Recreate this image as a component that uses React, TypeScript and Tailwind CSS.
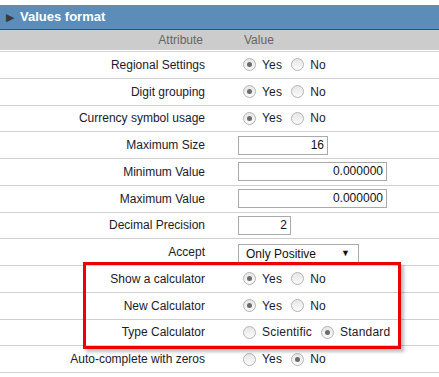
import React from 'react';

const font = { fontFamily: '"Liberation Sans", Arial, sans-serif' };

const Radio = ({ checked }: { checked?: boolean }) => (
  <span className="inline-flex items-center justify-center w-[13px] h-[13px] rounded-full border border-[#b4b4b4] bg-gradient-to-b from-[#e6e6e6] to-[#fbfbfb] shrink-0">
    {checked && <span className="w-[5px] h-[5px] rounded-full bg-[#6b6b6b]" />}
  </span>
);

const Choice = ({ options, selected }: { options: string[]; selected: number }) => (
  <div className="flex items-center pl-[5px]">
    {options.map((o, i) => (
      <div key={o} className="flex items-center mr-[9px]">
        <Radio checked={i === selected} />
        <span className="ml-[6px] text-[12px] tracking-[0.2px] text-[#1a1a2a]">{o}</span>
      </div>
    ))}
  </div>
);

const TextBox = ({ value, width }: { value: string; width: string }) => (
  <div className={`${width} h-[19px] border border-[#a9a9a9] bg-white text-right pr-[3px] text-[12px] leading-[17px] text-[#111]`}>
    {value}
  </div>
);

const rows: { label: string; value: React.ReactNode }[] = [
  { label: 'Regional Settings', value: <Choice options={['Yes', 'No']} selected={0} /> },
  { label: 'Digit grouping', value: <Choice options={['Yes', 'No']} selected={0} /> },
  { label: 'Currency symbol usage', value: <Choice options={['Yes', 'No']} selected={0} /> },
  { label: 'Maximum Size', value: <TextBox value="16" width="w-[90px]" /> },
  { label: 'Minimum Value', value: <TextBox value="0.000000" width="w-[149px]" /> },
  { label: 'Maximum Value', value: <TextBox value="0.000000" width="w-[149px]" /> },
  { label: 'Decimal Precision', value: <TextBox value="2" width="w-[53px]" /> },
  {
    label: 'Accept',
    value: (
      <div className="w-[121px] h-[21px] mt-[4px] border border-[#a9a9a9] bg-white flex items-center justify-between pl-[7px] pr-[8px] text-[12px] text-[#111]">
        <span>Only Positive</span>
        <span className="text-[9px]">▼</span>
      </div>
    ),
  },
  { label: 'Show a calculator', value: <Choice options={['Yes', 'No']} selected={0} /> },
  { label: 'New Calculator', value: <Choice options={['Yes', 'No']} selected={0} /> },
  { label: 'Type Calculator', value: <Choice options={['Scientific', 'Standard']} selected={1} /> },
  { label: 'Auto-complete with zeros', value: <Choice options={['Yes', 'No']} selected={1} /> },
];

export default function App() {
  return (
    <div className="relative w-[439px] h-[377px] bg-white pt-[5px] overflow-hidden" style={font}>
      {/* panel title */}
      <div className="h-[24px] bg-[#5b8db8] flex items-center pl-[6px]">
        <span className="text-[#3a3a3a] text-[11px] leading-none">▶</span>
        <span className="ml-[6px] text-white font-bold text-[13px]">Values format</span>
      </div>
      <div className="h-[1px] bg-[#4a4a4a]" />

      {/* column heads */}
      <div className="grid grid-cols-[222px_1fr] h-[20px] bg-[#cccccc] text-[12px] text-[#666] items-center">
        <div className="text-right pr-[19px]">Attribute</div>
        <div className="pl-[22px]">Value</div>
      </div>
      <div className="h-[1px] bg-white" />
      <div className="h-[1px] bg-[#d4d4d4]" />

      {rows.map((r) => (
        <div key={r.label} className="grid grid-cols-[222px_1fr] h-[26.75px] border-b border-[#d0d0d0] items-center">
          <div className="text-right pr-[17px] text-[12px] text-[#1a1a2a]">{r.label}</div>
          <div className="pl-[16px]">{r.value}</div>
        </div>
      ))}

      {/* annotation */}
      <div className="absolute left-[83px] top-[262px] w-[318px] h-[87px] border-[3px] border-[#ee0000] shadow-[3px_3px_3px_rgba(0,0,0,0.25)]" />
    </div>
  );
}
